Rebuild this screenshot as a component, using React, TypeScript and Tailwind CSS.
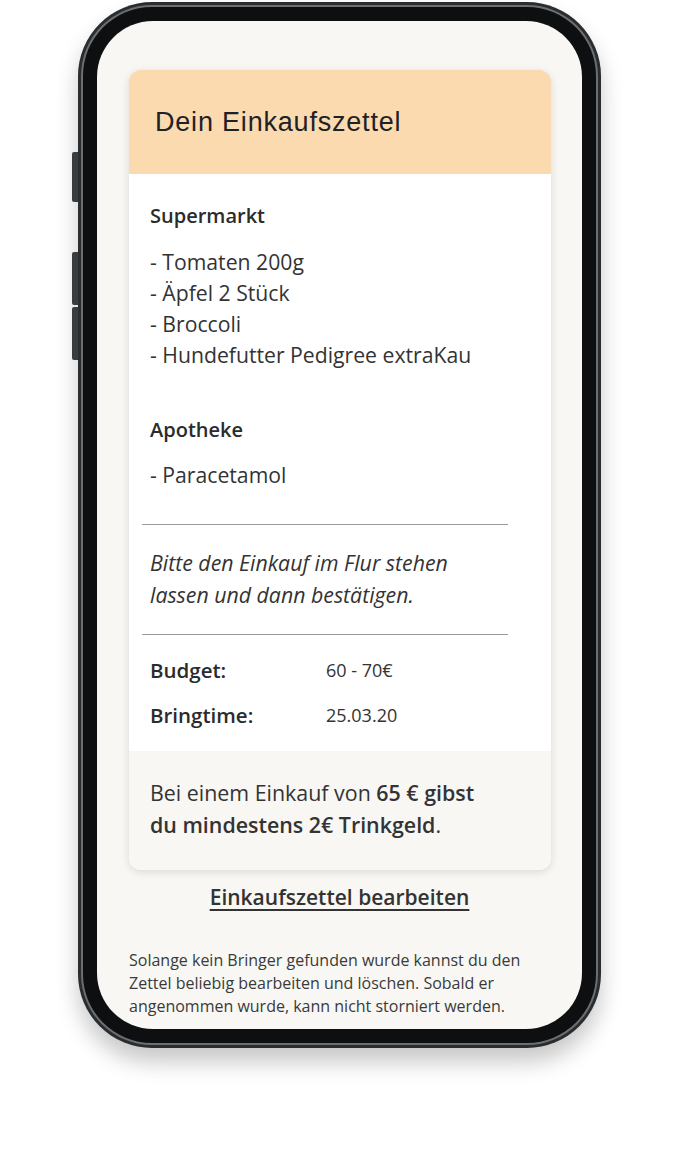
import React from "react";

export default function App() {
  const os = { fontFamily: '"Open Sans", "Noto Sans", sans-serif' };
  return (
    <div className="w-[700px] h-[1160px] bg-white overflow-hidden" style={os}>
      <div className="relative ml-[78px] mt-[2px] w-[523px] h-[1046px] rounded-[74px] bg-[#2a2d30] p-[3px] shadow-[0_14px_22px_rgba(0,0,0,0.22)]">
        {/* side buttons */}
        <div className="absolute left-[-6px] top-[150px] w-[6px] h-[50px] rounded-l-[2px] bg-[#3a3d40]" />
        <div className="absolute left-[-6px] top-[250px] w-[6px] h-[53px] rounded-l-[2px] bg-[#3a3d40]" />
        <div className="absolute left-[-6px] top-[305px] w-[6px] h-[53px] rounded-l-[2px] bg-[#3a3d40]" />
        <div className="w-full h-full rounded-[71px] bg-[#6b6f72] p-[2px]">
          <div className="w-full h-full rounded-[69px] bg-[#0d0f11] p-[14px]">
            <div className="w-full h-full rounded-[56px] bg-[#f8f7f4] overflow-hidden pt-[49px] px-[32px]">
              {/* card */}
              <div className="w-[422px] rounded-[12px] overflow-hidden shadow-[0_2px_8px_rgba(0,0,0,0.12)]">
                <div className="h-[104px] bg-[#fbdaaf] flex items-center pl-[26px]">
                  <span className="text-[27px] tracking-[0.8px] text-[#1e2226]" style={{ fontFamily: '"Liberation Sans", Arial, sans-serif' }}>
                    Dein Einkaufszettel
                  </span>
                </div>
                <div className="bg-white pt-[28px] pb-[21px] px-[13px] text-[#333]">
                  <div className="px-[8px]">
                    <div className="text-[20px] font-semibold leading-[28px] text-[#2b2b2b]">Supermarkt</div>
                    <div className="mt-[16px] text-[21.2px] leading-[31px]">
                      <div>- Tomaten 200g</div>
                      <div>- Äpfel 2 Stück</div>
                      <div>- Broccoli</div>
                      <div>- Hundefutter Pedigree extraKau</div>
                    </div>
                    <div className="mt-[46px] text-[20px] font-semibold leading-[28px] text-[#2b2b2b]">Apotheke</div>
                    <div className="mt-[15px] text-[21.2px] leading-[31px]">- Paracetamol</div>
                  </div>
                  <div className="w-[366px] mt-[34px] h-[1px] bg-[#9a9a9a]" />
                  <div className="px-[8px] pt-[22px] pb-[23px] text-[21.3px] italic leading-[32px] w-[340px]">
                    Bitte den Einkauf im Flur stehen lassen und dann bestätigen.
                  </div>
                  <div className="w-[366px] h-[1px] bg-[#9a9a9a]" />
                  <div className="px-[8px] pt-[20px]">
                    <div className="flex items-center h-[30px]">
                      <span className="w-[176px] text-[20.5px] font-semibold text-[#2b2b2b]">Budget:</span>
                      <span className="text-[18px]">60 - 70€</span>
                    </div>
                    <div className="flex items-center h-[30px] mt-[15px]">
                      <span className="w-[176px] text-[20.5px] font-semibold text-[#2b2b2b]">Bringtime:</span>
                      <span className="text-[18px]">25.03.20</span>
                    </div>
                  </div>
                </div>
                <div className="bg-[#f8f7f4] px-[21px] pt-[26px] pb-[29px] text-[21.4px] leading-[32px] text-[#333]">
                  <div className="w-[340px]">
                    Bei einem Einkauf von <span className="font-semibold">65 € gibst du mindestens 2€ Trinkgeld</span>.
                  </div>
                </div>
              </div>
              <div className="mt-[12px] text-center">
                <span className="text-[21px] font-semibold underline underline-offset-[4px] decoration-[1.5px] text-[#333]">
                  Einkaufszettel bearbeiten
                </span>
              </div>
              <div className="mt-[35px] text-[16px] leading-[23px] text-[#3a3a3a] w-[405px]">
                Solange kein Bringer gefunden wurde kannst du den Zettel beliebig bearbeiten und löschen. Sobald er angenommen wurde, kann nicht storniert werden.
              </div>
            </div>
          </div>
        </div>
      </div>
    </div>
  );
}
